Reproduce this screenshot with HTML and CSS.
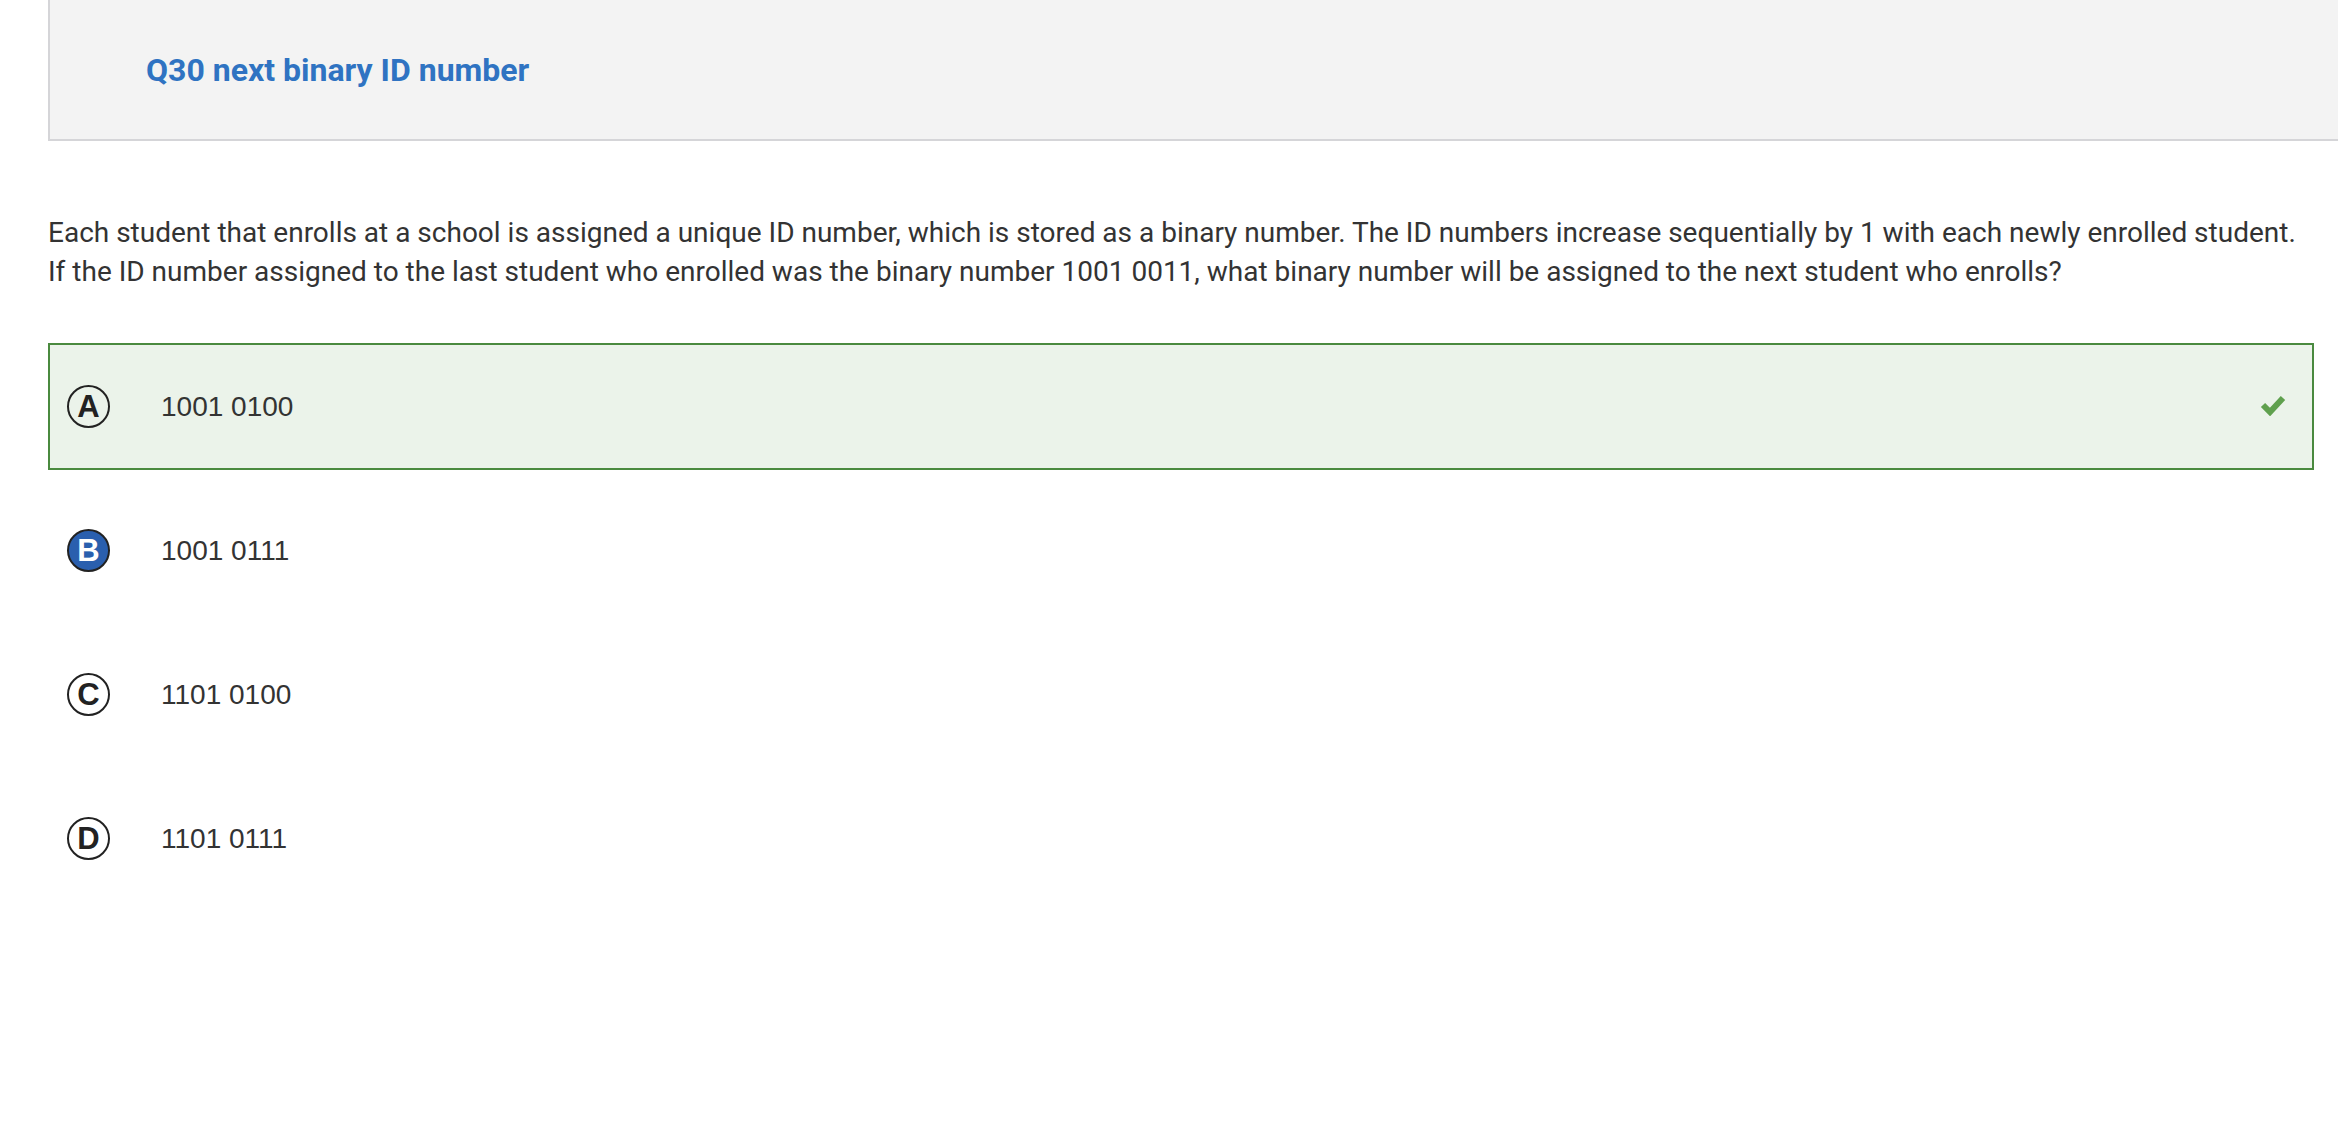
FILE: index.html
```html
<!DOCTYPE html>
<html lang="en">
<head>
<meta charset="utf-8">
<title>Q30 next binary ID number</title>
<link rel="stylesheet" href="styles.css">
</head>
<body>
<div class="page">
  <header class="q-header">
    <h1 class="q-title">Q30 next binary ID number</h1>
  </header>
  <main class="q-body">
    <div class="q-text">
      <span class="q-line">Each student that enrolls at a school is assigned a unique ID number, which is stored as a binary number. The ID numbers increase sequentially by 1 with each newly enrolled student.</span>
      <span class="q-line">If the ID number assigned to the last student who enrolled was the binary number 1001 0011, what binary number will be assigned to the next student who enrolls?</span>
    </div>
    <ul class="options">
      <li class="option option-correct">
        <span class="letter">A</span>
        <span class="answer">1001 0100</span>
        <svg class="check" width="26" height="22" viewBox="0 0 26 22" aria-hidden="true"><path d="M3 11 L10 18 L23 4" fill="none" stroke="#5fa04e" stroke-width="6" stroke-linejoin="miter"/></svg>
      </li>
      <li class="option">
        <span class="letter letter-selected">B</span>
        <span class="answer">1001 0111</span>
      </li>
      <li class="option">
        <span class="letter">C</span>
        <span class="answer">1101 0100</span>
      </li>
      <li class="option">
        <span class="letter">D</span>
        <span class="answer">1101 0111</span>
      </li>
    </ul>
  </main>
</div>
</body>
</html>
```
FILE: styles.css
```css
html, body {
  margin: 0;
  padding: 0;
  background: #ffffff;
}

.page {
  padding-left: 48px;
  font-family: Roboto, "Liberation Sans", sans-serif;
  color: #333333;
}

.q-header {
  box-sizing: border-box;
  height: 141px;
  background: #f3f3f3;
  border-left: 2px solid #d5d5d8;
  border-bottom: 2px solid #d5d5d8;
  padding-left: 96px;
  display: flex;
  align-items: center;
}

.q-title {
  margin: 0;
  font-family: Roboto, "Liberation Sans", sans-serif;
  font-weight: 700;
  font-size: 32px;
  line-height: 40px;
  color: #2f73c2;
}

.q-body {
  padding-right: 24px;
}

.q-text {
  margin: 72px 0 52px 0;
  font-size: 28px;
  line-height: 39px;
  color: #333333;
}

.q-line {
  display: block;
  white-space: nowrap;
}

.options {
  list-style: none;
  margin: 0;
  padding: 0;
  display: flex;
  flex-direction: column;
  gap: 17px;
}

.option {
  box-sizing: border-box;
  height: 127px;
  border: 2px solid transparent;
  padding: 0 26px 0 17px;
  display: flex;
  align-items: center;
}

.option-correct {
  background: #ebf3ea;
  border-color: #4a8a3f;
}

.letter {
  box-sizing: border-box;
  width: 43px;
  height: 43px;
  border: 2px solid #222222;
  border-radius: 50%;
  display: flex;
  align-items: center;
  justify-content: center;
  font-family: "Liberation Sans", Arial, sans-serif;
  font-weight: 700;
  font-size: 31px;
  line-height: 1;
  color: #222222;
  flex: none;
}

.letter-selected {
  background: #2a5fae;
  color: #ffffff;
}

.answer {
  margin-left: 51px;
  font-family: "Liberation Sans", Arial, sans-serif;
  font-size: 28px;
  color: #333333;
  flex: 1;
}

.check {
  flex: none;
  margin-top: -4px;
}
```
